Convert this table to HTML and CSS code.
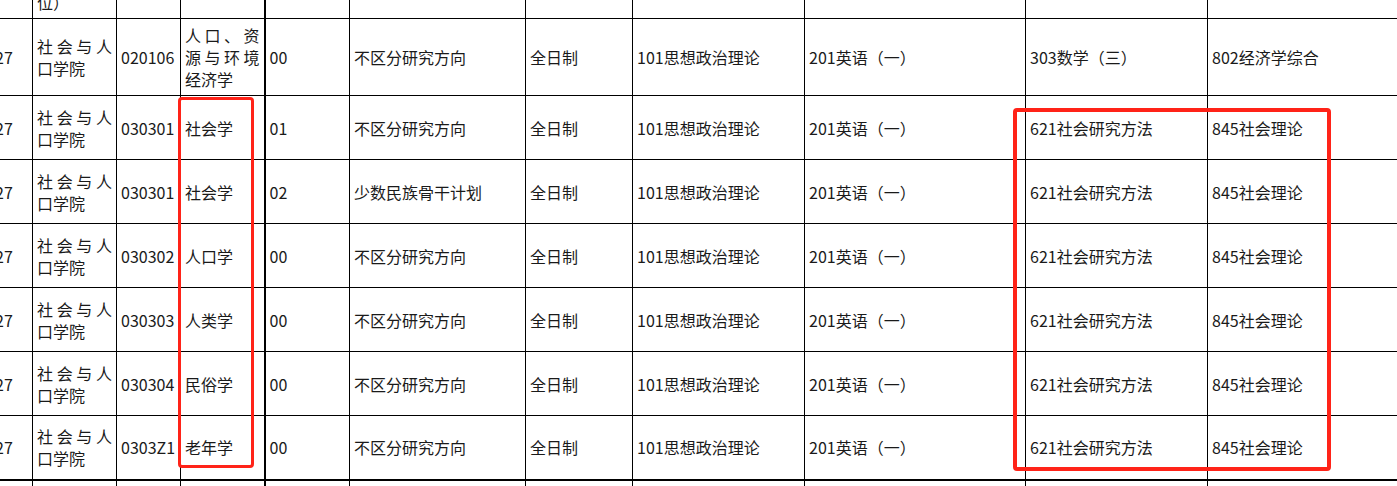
FILE: index.html
```html
<!DOCTYPE html>
<html lang="zh-CN">
<head>
<meta charset="utf-8">
<title>招生专业目录</title>
<link rel="stylesheet" href="styles.css">
</head>
<body>
<div class="page">
  <table class="grid">
    <colgroup>
      <col class="c-code"><col class="c-dept"><col class="c-major-code"><col class="c-major">
      <col class="c-dir-code"><col class="c-dir"><col class="c-mode"><col class="c-politics">
      <col class="c-lang"><col class="c-exam1"><col class="c-exam2">
    </colgroup>
    <tr class="row-head">
      <td></td><td class="head-cell">招生院系<br>名称（单<br>位）</td><td></td><td></td><td class="thick"></td><td></td><td></td><td></td><td></td><td></td><td></td>
    </tr>
    <tr class="row-tall">
      <td>27</td><td class="just">社会与人口学院</td><td>020106</td><td class="just">人口、资源与环境经济学</td><td class="thick">00</td><td>不区分研究方向</td><td>全日制</td><td>101思想政治理论</td><td>201英语（一）</td><td>303数学（三）</td><td>802经济学综合</td>
    </tr>
    <tr class="row">
      <td>27</td><td class="just">社会与人口学院</td><td>030301</td><td class="just">社会学</td><td class="thick">01</td><td>不区分研究方向</td><td>全日制</td><td>101思想政治理论</td><td>201英语（一）</td><td>621社会研究方法</td><td>845社会理论</td>
    </tr>
    <tr class="row">
      <td>27</td><td class="just">社会与人口学院</td><td>030301</td><td class="just">社会学</td><td class="thick">02</td><td>少数民族骨干计划</td><td>全日制</td><td>101思想政治理论</td><td>201英语（一）</td><td>621社会研究方法</td><td>845社会理论</td>
    </tr>
    <tr class="row">
      <td>27</td><td class="just">社会与人口学院</td><td>030302</td><td class="just">人口学</td><td class="thick">00</td><td>不区分研究方向</td><td>全日制</td><td>101思想政治理论</td><td>201英语（一）</td><td>621社会研究方法</td><td>845社会理论</td>
    </tr>
    <tr class="row">
      <td>27</td><td class="just">社会与人口学院</td><td>030303</td><td class="just">人类学</td><td class="thick">00</td><td>不区分研究方向</td><td>全日制</td><td>101思想政治理论</td><td>201英语（一）</td><td>621社会研究方法</td><td>845社会理论</td>
    </tr>
    <tr class="row">
      <td>27</td><td class="just">社会与人口学院</td><td>030304</td><td class="just">民俗学</td><td class="thick">00</td><td>不区分研究方向</td><td>全日制</td><td>101思想政治理论</td><td>201英语（一）</td><td>621社会研究方法</td><td>845社会理论</td>
    </tr>
    <tr class="row row-last">
      <td>27</td><td class="just">社会与人口学院</td><td>0303Z1</td><td class="just">老年学</td><td class="thick">00</td><td>不区分研究方向</td><td>全日制</td><td>101思想政治理论</td><td>201英语（一）</td><td>621社会研究方法</td><td>845社会理论</td>
    </tr>
    <tr class="row-tail">
      <td></td><td></td><td></td><td></td><td class="thick"></td><td></td><td></td><td></td><td></td><td></td><td></td>
    </tr>
  </table>
  <div class="mark mark-major"></div>
  <div class="mark mark-exam"></div>
</div>
</body>
</html>
```

FILE: styles.css
```css
html, body {
  margin: 0;
  padding: 0;
  background: #ffffff;
}

.page {
  position: relative;
  width: 1397px;
  height: 486px;
  overflow: hidden;
}

.grid {
  border-collapse: collapse;
  table-layout: fixed;
  width: 1467px;
  margin-left: -10px;
  margin-top: -54px;
  font-family: "Noto Sans CJK SC", "Microsoft YaHei", sans-serif;
  font-size: 16px;
  line-height: 22px;
  color: #1a1a1a;
}

.c-code { width: 42px; }
.c-dept { width: 84px; }
.c-major-code { width: 64px; }
.c-major { width: 84px; }
.c-dir-code { width: 85px; }
.c-dir { width: 176px; }
.c-mode { width: 107px; }
.c-politics { width: 172px; }
.c-lang { width: 221px; }
.c-exam1 { width: 182px; }
.c-exam2 { width: 250px; }

.grid td {
  border: 1px solid #000;
  padding: 0 4px;
  vertical-align: middle;
  text-align: left;
  overflow: hidden;
}

.grid td.just {
  text-align: justify;
}

.grid td.thick {
  border-left: 2px solid #000;
}

.row-head { height: 72px; }
.row-head .head-cell {
  vertical-align: bottom;
  padding-bottom: 5px;
  text-align: left;
}

.row-tall { height: 77px; }
.row { height: 64px; }
.row-last td { border-bottom: 2px solid #000; }
.row-tail { height: 30px; }

.mark {
  position: absolute;
  border: 3px solid #ff2318;
  border-radius: 4px;
  box-sizing: border-box;
}

.mark-major {
  left: 178px;
  top: 97px;
  width: 76px;
  height: 371px;
}

.mark-exam {
  left: 1013px;
  top: 108px;
  width: 318px;
  height: 363px;
  border-width: 4px;
}
```
